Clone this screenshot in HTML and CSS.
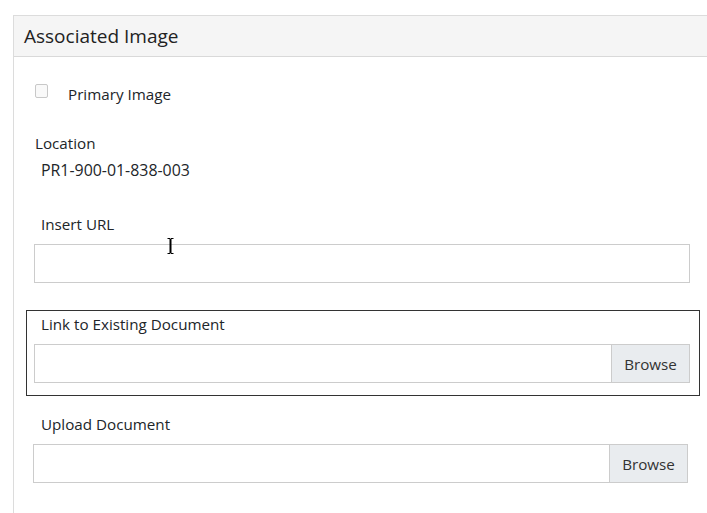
FILE: index.html
```html
<!DOCTYPE html>
<html lang="en">
<head>
    <meta charset="UTF-8">
    <meta name="viewport" content="width=device-width, initial-scale=1.0">
    <title>Associated Image</title>
    <link rel="stylesheet" href="styles.css">
</head>
<body>
    <div class="card">
        <div class="card-header">Associated Image</div>
        <div class="card-body">
            <label class="check-row">
                <span class="check"></span>
                <span>Primary Image</span>
            </label>

            <div class="location-label">Location</div>
            <div class="location-value">PR1-900-01-838-003</div>

            <div class="field-label">Insert URL</div>
            <div class="url-wrap">
                <input class="text-input url-input" type="text">
                <!-- mouse cursor over the field -->
                <svg class="ibeam" width="7" height="16" viewBox="0 0 7 16">
                    <path d="M0.5 0.5h2.5v15h-2.5M6.5 0.5h-2.5v15h2.5M3.5 1v14" stroke="#000" stroke-width="1" fill="none"/>
                </svg>
            </div>

            <div class="doc-box">
                <div class="field-label box-label">Link to Existing Document</div>
                <div class="input-group">
                    <input class="text-input" type="text">
                    <span class="browse">Browse</span>
                </div>
            </div>

            <div class="field-label upload-label">Upload Document</div>
            <div class="input-group upload-group">
                <input class="text-input" type="text">
                <span class="browse">Browse</span>
            </div>
        </div>
    </div>
</body>
</html>
```

FILE: styles.css
```css
*{
    margin: 0;
    padding: 0;
    box-sizing: border-box;
}
body{
    font-family: "Open Sans", "Noto Sans", sans-serif;
    font-size: 15.2px;
    color: #212529;
    background: #fff;
    overflow: hidden;
}
.card{
    margin: 15px 0 0 13px;
    width: 694px;
    height: 500px;
    border-top: 1px solid #dcdcdc;
    border-left: 1px solid #dcdcdc;
}
.card-header{
    height: 41px;
    line-height: 40px;
    background-color: #f5f5f5;
    border-bottom: 1px solid #d9d9d9;
    padding-left: 10px;
    font-size: 19px;
    color: #222;
}
.card-body{
    padding-left: 20px;
}
.check-row{
    display: flex;
    align-items: flex-start;
    margin-top: 27px;
    height: 20px;
    line-height: 20px;
}
.check{
    width: 13px;
    height: 14px;
    margin: 0 20px 0 1px;
    border: 1px solid #c8c8c8;
    border-radius: 2px;
    background: #f9f9f9;
}
.location-label{
    margin-top: 29px;
    padding-left: 1px;
    line-height: 20px;
}
.location-value{
    margin-top: 7px;
    padding-left: 7px;
    line-height: 20px;
    font-size: 15.9px;
}
.field-label{
    padding-left: 7px;
    line-height: 20px;
}
.field-label:nth-of-type(3){
    margin-top: 34px;
}
.url-wrap{
    position: relative;
    margin-top: 10px;
    width: 656px;
}
.text-input{
    display: block;
    width: 656px;
    height: 39px;
    border: 1px solid #ccc;
    outline: none;
    font: inherit;
}
.ibeam{
    position: absolute;
    left: 133px;
    top: -6px;
}
.doc-box{
    margin: 27px 0 0 -8px;
    width: 674px;
    border: 1px solid #333;
    padding: 3px 0 12px 7px;
}
.box-label{
    padding-left: 7px;
}
.input-group{
    display: flex;
    margin-top: 10px;
    width: 656px;
}
.input-group .text-input{
    flex: 1;
    width: auto;
    border-right: none;
}
.browse{
    width: 79px;
    height: 39px;
    line-height: 38px;
    text-align: center;
    background-color: #e9ecef;
    border: 1px solid #ccc;
    color: #333;
}
.upload-label{
    margin-top: 18px;
}
.upload-group{
    margin-left: -1px;
    width: 655px;
}
```
